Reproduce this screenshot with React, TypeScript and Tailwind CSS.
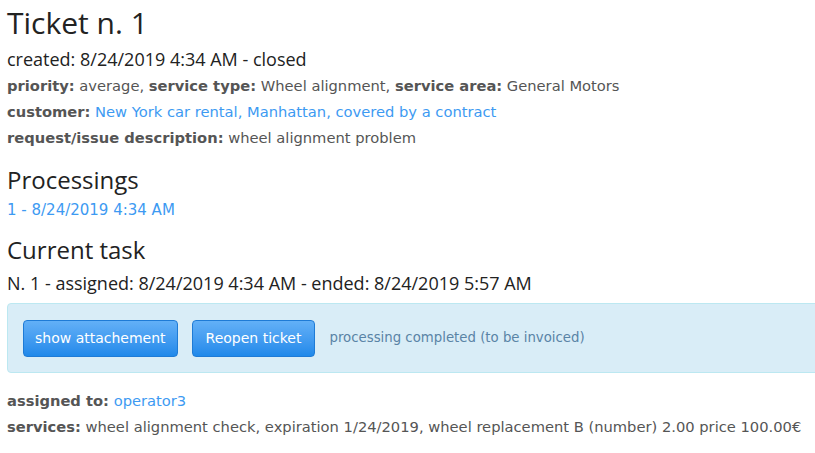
const head = "font-['Open_Sans',sans-serif]"
const body = "font-['DejaVu_Sans',sans-serif]"

const Field = ({ label, children }: { label: string; children: React.ReactNode }) => (
	<span>
		<strong className="font-bold">{label}</strong> {children}
	</span>
)

const App = () => {
	return (
		<div className="w-[815px] h-[453px] overflow-hidden bg-white pl-[7px] text-[#333]">
			<h1 className={`${head} text-[30px] leading-[40px] pt-[3px] text-[#222]`}>Ticket n. 1</h1>
			<div className={`${head} text-[18px] leading-[24px] mt-[4px] text-[#222]`}>
				created: 8/24/2019 4:34 AM - closed
			</div>
			<div className={`${body} text-[14.7px] leading-[26px] text-[#555] mt-[2px]`}>
				<div>
					<Field label="priority:">average,</Field>{" "}
					<Field label="service type:">Wheel alignment,</Field>{" "}
					<Field label="service area:">General Motors</Field>
				</div>
				<div>
					<strong className="font-bold">customer:</strong>{" "}
					<a className="text-[#3d9af2]">New York car rental, Manhattan, covered by a contract</a>
				</div>
				<div>
					<Field label="request/issue description:">wheel alignment problem</Field>
				</div>
			</div>

			<h2 className={`${head} text-[24px] leading-[30px] mt-[14px] text-[#222]`}>Processings</h2>
			<div className={`${body} text-[15px] leading-[24px] mt-[3px]`}>
				<a className="text-[#3d9af2]">1 - 8/24/2019 4:34 AM</a>
			</div>

			<h2 className={`${head} text-[24px] leading-[30px] mt-[13px] text-[#222]`}>Current task</h2>
			<div className={`${head} text-[18px] leading-[28px] mt-[4px] text-[#222]`}>
				N. 1 - assigned: 8/24/2019 4:34 AM - ended: 8/24/2019 5:57 AM
			</div>

			<div className="mt-[6px] h-[70px] w-[830px] rounded-l-[4px] border border-[#bce8f1] bg-[#d9edf7] flex items-center pl-[15px] gap-[14px]">
				<button className={`${body} text-[14px] h-[37px] px-[11px] rounded-[4px] border border-[#1e7bd6] bg-gradient-to-b from-[#62b0f7] to-[#1f89ea] text-white`}>
					show attachement
				</button>
				<button className={`${body} text-[14px] h-[37px] px-[13px] rounded-[4px] border border-[#1e7bd6] bg-gradient-to-b from-[#62b0f7] to-[#1f89ea] text-white`}>
					Reopen ticket
				</button>
				<span className={`${body} text-[13.3px] text-[#5a84a6]`}>processing completed (to be invoiced)</span>
			</div>

			<div className={`${body} text-[14.7px] leading-[26px] text-[#555] mt-[15px]`}>
				<div>
					<strong className="font-bold">assigned to:</strong> <a className="text-[#3d9af2]">operator3</a>
				</div>
				<div>
					<Field label="services:">
						wheel alignment check, expiration 1/24/2019, wheel replacement B (number) 2.00 price 100.00€
					</Field>
				</div>
			</div>
		</div>
	)
}
export default App
